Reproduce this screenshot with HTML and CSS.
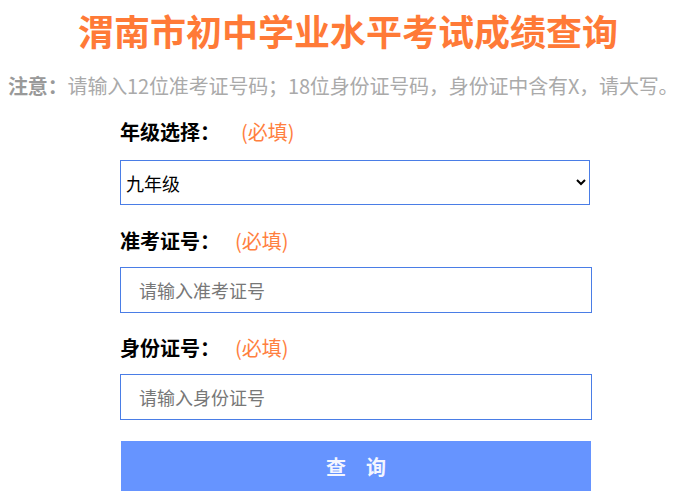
FILE: index.html
```html
<!DOCTYPE html>
<html lang="zh-CN">
<head>
<meta charset="utf-8">
<title>渭南市初中学业水平考试成绩查询</title>
<link rel="stylesheet" href="styles.css">
</head>
<body>
<div class="page">
  <h1 class="title">渭南市初中学业水平考试成绩查询</h1>
  <p class="note"><b class="note-key">注意：</b>请输入12位准考证号码；18位身份证号码，身份证中含有X，请大写。</p>
  <form class="form">
    <div class="field">
      <label class="label label-first">年级选择：<span class="req req-wide">(必填)</span></label>
      <select class="select">
        <option>九年级</option>
      </select>
    </div>
    <div class="field">
      <label class="label">准考证号：<span class="req">(必填)</span></label>
      <input class="input" type="text" placeholder="请输入准考证号">
    </div>
    <div class="field">
      <label class="label">身份证号：<span class="req">(必填)</span></label>
      <input class="input" type="text" placeholder="请输入身份证号">
    </div>
    <button class="submit" type="button">查询</button>
  </form>
</div>
</body>
</html>
```

FILE: styles.css
```css
html, body {
  overflow: hidden;
}
body {
  margin: 8px 0 8px 8px;
  background: #fff;
  font-family: "Noto Sans CJK SC", "Noto Sans", sans-serif;
  color: #000;
}
.page {
  width: 673px;
}
.title {
  margin: 0;
  padding: 0 0 0 7px;
  text-align: center;
  font-size: 36px;
  line-height: 44px;
  font-weight: bold;
  color: #ff7a37;
}
.note {
  margin: 20px 0 0 0;
  white-space: nowrap;
  font-size: 20px;
  line-height: 28px;
  letter-spacing: -0.15px;
  color: #aaaaaa;
}
.note-key {
  color: #999;
}
.form {
  margin-left: 112px;
  width: 472px;
  padding-top: 18px;
}
.field {
  display: flex;
  flex-direction: column;
}
.label {
  font-size: 20px;
  font-weight: bold;
  line-height: 28px;
  margin-bottom: 12px;
}
.label-first {
  margin-bottom: 14px;
}
.req {
  font-weight: normal;
  color: #ff8040;
  margin-left: 15px;
}
.req-wide {
  margin-left: 21px;
}
.select {
  width: 470px;
  height: 45px;
  box-sizing: border-box;
  border: 1px solid #4a7de6;
  border-radius: 0;
  background: #fff;
  font-family: inherit;
  font-size: 18px;
  padding-left: 1px;
  color: #000;
  margin-bottom: 22px;
}
.input {
  width: 472px;
  height: 46px;
  box-sizing: border-box;
  border: 1px solid #4a7de6;
  border-radius: 0;
  padding: 0 18px;
  font-family: inherit;
  font-size: 18px;
  margin-bottom: 21px;
  outline: none;
}
.input::placeholder {
  color: #777;
}
.submit {
  width: 470px;
  height: 50px;
  margin: 0 0 0 1px;
  border: none;
  border-radius: 0;
  background: #6694ff;
  color: #f4f6ff;
  font-family: inherit;
  font-size: 20px;
  font-weight: bold;
  letter-spacing: 20px;
  text-indent: 20px;
  padding: 0;
}
```
